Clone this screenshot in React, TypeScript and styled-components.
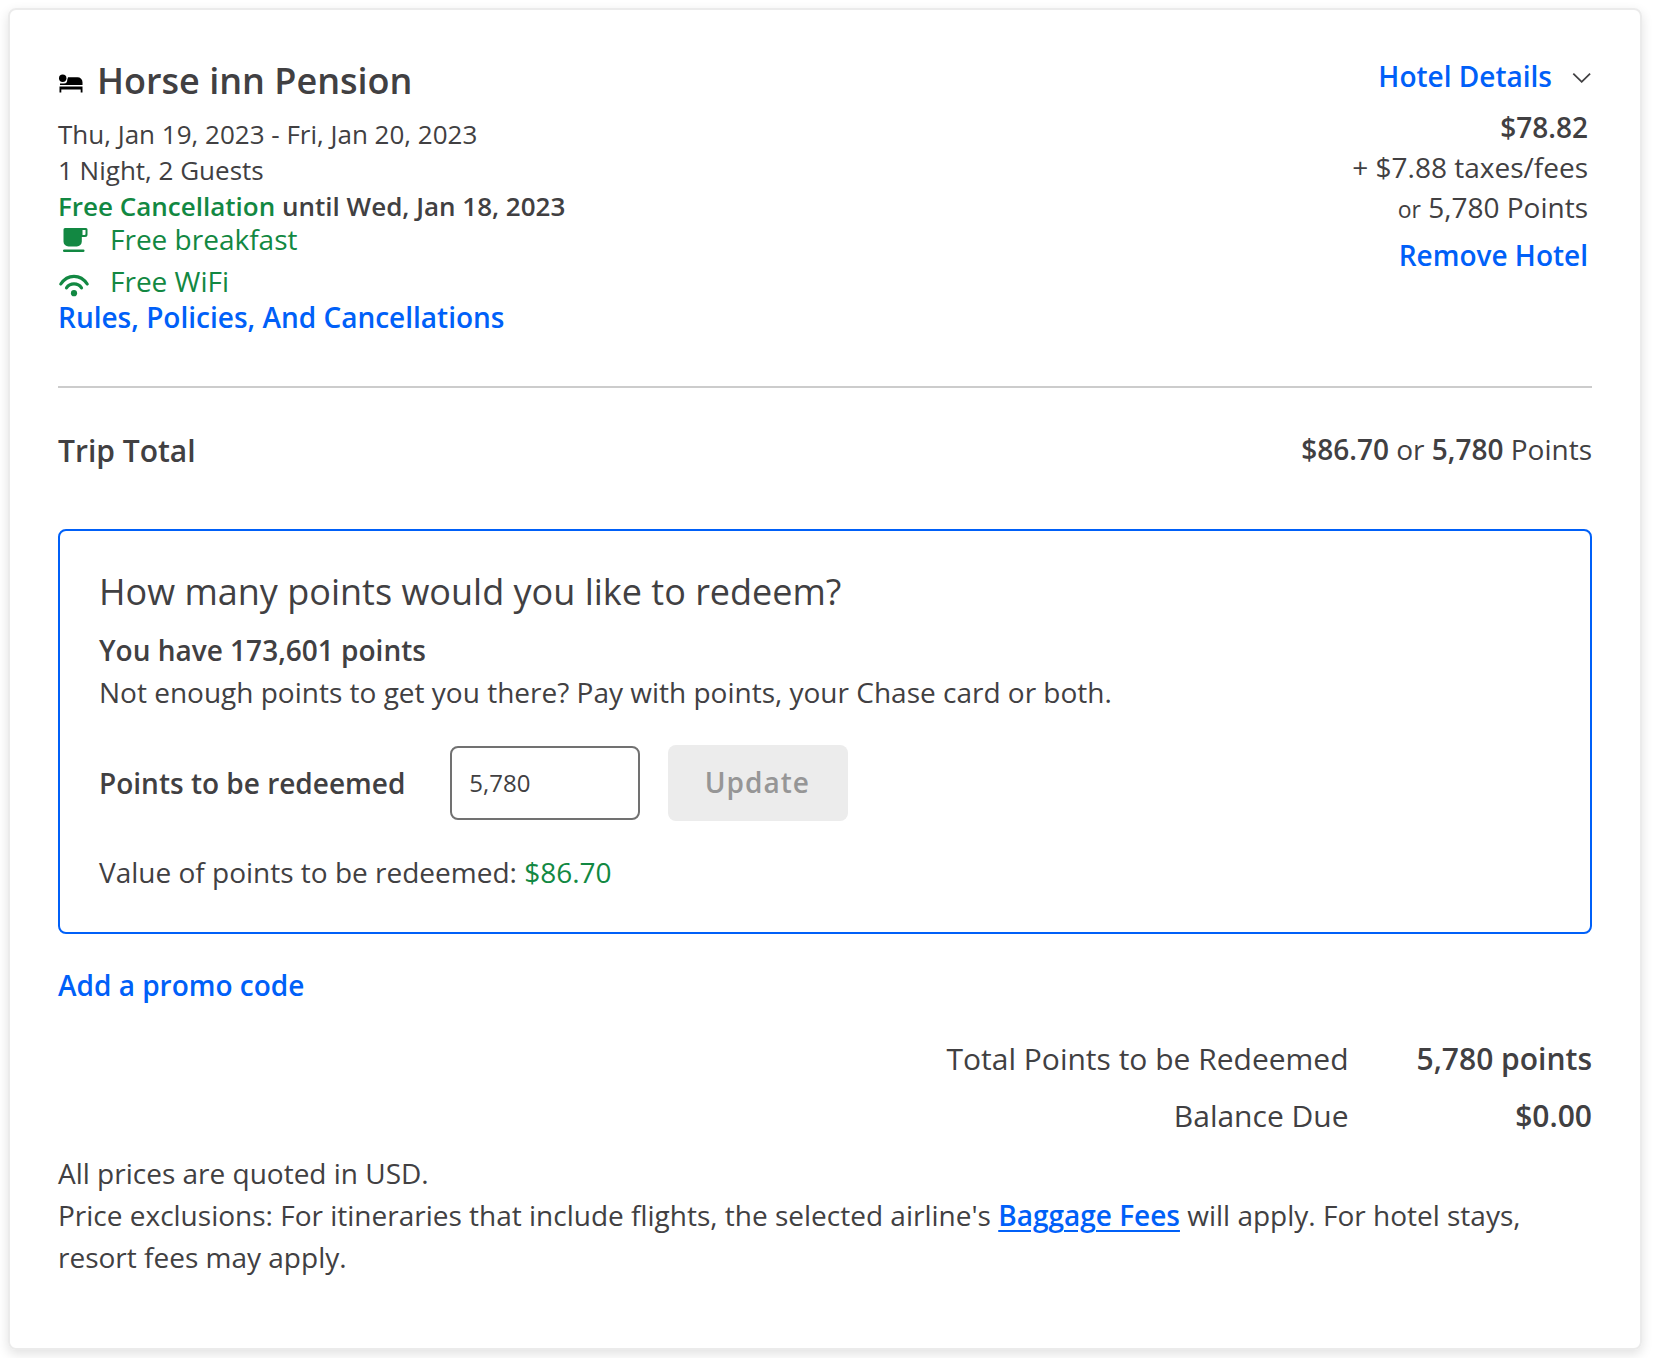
import React, { useState } from "react";
import styled, { createGlobalStyle } from "styled-components";

const color = {
  text: "#414042",
  link: "#0060f8",
  green: "#128842",
};

const GlobalStyle = createGlobalStyle`
  *, *::before, *::after { box-sizing: border-box; }
  body {
    margin: 0;
    background: #ffffff;
    color: ${color.text};
    font-family: "Open Sans", "Noto Sans", sans-serif;
    font-size: 28px;
    line-height: 42px;
  }
  h1, h2, p, ul, dl, dd { margin: 0; padding: 0; }
`;

const Card = styled.main`
  margin: 8px 12px 8px 8px;
  padding: 48px 48px 70px;
  border: 2px solid #ebebeb;
  border-radius: 8px;
  box-shadow: 0 4px 12px rgba(0, 0, 0, 0.12);
`;

const HotelRow = styled.section`
  display: flex;
  justify-content: space-between;
  padding-bottom: 48px;
  border-bottom: 2px solid #cccccc;
`;

const HotelTitle = styled.h1`
  display: flex;
  align-items: center;
  gap: 14px;
  margin-bottom: 12px;
  font-size: 36px;
  font-weight: 600;
  line-height: 46px;

  svg { margin-top: 4px; }
`;

const StayLine = styled.p<{ $strong?: boolean }>`
  font-size: 26px;
  line-height: 36px;
  font-weight: ${(p) => (p.$strong ? 600 : 400)};
`;

const Accent = styled.span`
  color: ${color.green};
`;

const Perks = styled.ul`
  display: flex;
  flex-direction: column;
  gap: 12px;
  list-style: none;
  color: ${color.green};
`;

const Perk = styled.li`
  display: flex;
  align-items: center;
  gap: 20px;
  height: 30px;
  line-height: 30px;
`;

const Link = styled.a<{ $underline?: boolean }>`
  color: ${color.link};
  font-weight: 600;
  text-decoration: ${(p) => (p.$underline ? "underline" : "none")};
  text-decoration-thickness: 2px;
  text-underline-offset: 4px;
`;

const LinkButton = styled.button`
  padding: 0;
  border: 0;
  background: none;
  color: ${color.link};
  font: inherit;
  font-weight: 600;
  cursor: pointer;
`;

const PriceColumn = styled.div`
  display: flex;
  flex-direction: column;
  align-items: flex-end;
`;

const DetailsToggle = styled(LinkButton)`
  display: flex;
  align-items: center;
  gap: 20px;
  margin-bottom: 13px;
  line-height: 36px;

  svg { margin-top: 3px; }
`;

const PriceList = styled.div`
  display: flex;
  flex-direction: column;
  align-items: flex-end;
  padding-right: 4px;
  line-height: 40px;

  small { font-size: 23px; }
  button { margin-top: 6px; }
`;

const Strong = styled.strong`
  font-weight: 600;
`;

const TripTotal = styled.section`
  display: flex;
  align-items: flex-start;
  justify-content: space-between;
  padding: 42px 0 57px;
`;

const TripHeading = styled.h2`
  font-size: 30px;
  font-weight: 600;
  line-height: 42px;
`;

const TripAmount = styled.p`
  line-height: 38px;
`;

const RedeemPanel = styled.section`
  padding: 39px;
  border: 2px solid ${color.link};
  border-radius: 8px;
`;

const RedeemHeading = styled.h2`
  margin-bottom: 15px;
  font-size: 36px;
  font-weight: 400;
  line-height: 44px;
`;

const RedeemForm = styled.form`
  display: flex;
  align-items: center;
  margin: 32px 0 30px;
`;

const PointsLabel = styled.label`
  margin-right: 45px;
  font-weight: 600;
`;

const PointsInput = styled.input`
  width: 190px;
  height: 74px;
  margin-right: 28px;
  padding: 0 17px 2px;
  border: 2px solid #717171;
  border-radius: 8px;
  background: #ffffff;
  color: ${color.text};
  font: inherit;
  font-size: 24px;
`;

const UpdateButton = styled.button`
  width: 180px;
  height: 76px;
  padding: 0 2px 2px 0;
  border: 0;
  border-radius: 8px;
  background: #ececec;
  color: #969696;
  font: inherit;
  font-weight: 600;
  letter-spacing: 1px;
`;

const Promo = styled.div`
  padding: 30px 0 32px;
`;

const Totals = styled.dl`
  display: grid;
  grid-template-columns: 1fr auto;
  column-gap: 68px;
  row-gap: 15px;
  text-align: right;
  font-size: 30px;

  dd { font-weight: 600; }
`;

const Notes = styled.p`
  margin-top: 15px;
`;

const BedIcon = () => (
  <svg width="25" height="19" viewBox="0 0 25 19" fill="#000" aria-hidden="true">
    <circle cx="4.7" cy="4.200" r="3.700" />
    <path d="M10 3.200h9.500a5 5 0 0 1 5 5V11H2V9.400H6C8.500 9.400 9.200 8 9.300 5.500Z" />
    <path d="M1.500 12.600H24.500V18.500H22.700V15.400H3.300V18.500H1.500Z" />
  </svg>
);

const CupIcon = () => (
  <svg width="32" height="26" viewBox="0 0 32 26" fill="currentColor" aria-hidden="true">
    <path
      fillRule="evenodd"
      d="M7 2H28a1.500 1.500 0 0 1 1.500 1.500V8.500a2.500 2.500 0 0 1-2.500 2.500H23.800V15.500a5 5 0 0 1-5 5H10.500a5 5 0 0 1-5-5V3.500A1.500 1.500 0 0 1 7 2ZM24.500 4V9H26.500a1 1 0 0 0 1-1V4Z"
    />
    <rect x="5" y="23.400" width="21.500" height="2.500" rx="1.200" />
  </svg>
);

const WifiIcon = () => (
  <svg width="32" height="32" viewBox="0 0 32 32" fill="none" aria-hidden="true">
    <g stroke="currentColor" strokeWidth="3.200" strokeLinecap="round">
      <path d="M2.800 19C9.500 8.700 22.500 8.700 29.200 19" />
      <path d="M8.500 22.800C12 17.600 20 17.600 23.500 22.800" />
    </g>
    <circle cx="16" cy="28.200" r="3.100" fill="currentColor" />
  </svg>
);

const ChevronIcon = () => (
  <svg width="20" height="10" viewBox="0 0 20 10" fill="none" aria-hidden="true">
    <path d="M1.300.700 9.700 8.800 18.100.700" stroke={color.text} strokeWidth="1.800" />
  </svg>
);

export default function App() {
  const [points, setPoints] = useState("5,780");

  return (
    <>
      <GlobalStyle />
      <Card>
        <HotelRow>
          <div>
            <HotelTitle>
              <BedIcon />
              Horse inn Pension
            </HotelTitle>
            <StayLine>Thu, Jan 19, 2023 - Fri, Jan 20, 2023</StayLine>
            <StayLine>1 Night, 2 Guests</StayLine>
            <StayLine $strong>
              <Accent>Free Cancellation</Accent> until Wed, Jan 18, 2023
            </StayLine>
            <Perks>
              <Perk>
                <CupIcon />
                Free breakfast
              </Perk>
              <Perk>
                <WifiIcon />
                Free WiFi
              </Perk>
            </Perks>
            <Link href="#rules">Rules, Policies, And Cancellations</Link>
          </div>
          <PriceColumn>
            <DetailsToggle type="button" aria-expanded={false}>
              Hotel Details
              <ChevronIcon />
            </DetailsToggle>
            <PriceList>
              <Strong>$78.82</Strong>
              <span>+ $7.88 taxes/fees</span>
              <span>
                <small>or</small> 5,780 Points
              </span>
              <LinkButton type="button">Remove Hotel</LinkButton>
            </PriceList>
          </PriceColumn>
        </HotelRow>

        <TripTotal>
          <TripHeading>Trip Total</TripHeading>
          <TripAmount>
            <Strong>$86.70</Strong> or <Strong>5,780</Strong> Points
          </TripAmount>
        </TripTotal>

        <RedeemPanel>
          <RedeemHeading>How many points would you like to redeem?</RedeemHeading>
          <p>
            <Strong>You have 173,601 points</Strong>
          </p>
          <p>Not enough points to get you there? Pay with points, your Chase card or both.</p>
          <RedeemForm onSubmit={(e) => e.preventDefault()}>
            <PointsLabel htmlFor="points">Points to be redeemed</PointsLabel>
            <PointsInput
              id="points"
              type="text"
              value={points}
              onChange={(e) => setPoints(e.target.value)}
            />
            <UpdateButton type="submit" disabled>
              Update
            </UpdateButton>
          </RedeemForm>
          <p>
            Value of points to be redeemed: <Accent>$86.70</Accent>
          </p>
        </RedeemPanel>

        <Promo>
          <LinkButton type="button">Add a promo code</LinkButton>
        </Promo>

        <Totals>
          <dt>Total Points to be Redeemed</dt>
          <dd>5,780 points</dd>
          <dt>Balance Due</dt>
          <dd>$0.00</dd>
        </Totals>

        <Notes>
          All prices are quoted in USD.
          <br />
          Price exclusions: For itineraries that include flights, the selected airline's{" "}
          <Link href="#baggage" $underline>
            Baggage Fees
          </Link>{" "}
          will apply. For hotel stays, resort fees may apply.
        </Notes>
      </Card>
    </>
  );
}
